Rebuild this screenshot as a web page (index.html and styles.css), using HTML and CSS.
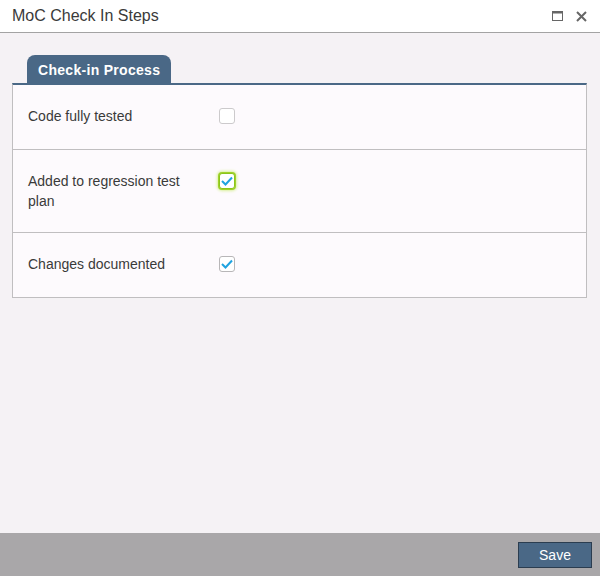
FILE: index.html
```html
<!DOCTYPE html>
<html lang="en">
<head>
    <meta charset="UTF-8">
    <title>MoC Check In Steps</title>
    <link rel="stylesheet" href="styles.css">
</head>
<body>
    <div class="dialog">
        <!-- Title bar -->
        <div class="titlebar">
            <span class="title">MoC Check In Steps</span>
            <div class="title-tools">
                <svg class="tool" width="11" height="10" viewBox="0 0 11 10">
                    <rect x="0.5" y="0.5" width="10" height="9" fill="none" stroke="#666" stroke-width="1"/>
                    <rect x="0" y="0" width="11" height="2.5" fill="#666"/>
                </svg>
                <svg class="tool" width="11" height="11" viewBox="0 0 11 11">
                    <path d="M1 1 L10 10 M10 1 L1 10" stroke="#666" stroke-width="2"/>
                </svg>
            </div>
        </div>

        <!-- Content -->
        <div class="content">
            <div class="tabs">
                <div class="tab">Check-in Process</div>
            </div>
            <div class="panel">
                <div class="row">
                    <div class="label">Code fully tested</div>
                    <span class="check"></span>
                </div>
                <div class="row">
                    <div class="label">Added to regression test plan</div>
                    <span class="check checked focused">
                        <svg width="12" height="10" viewBox="0 0 12 10"><path d="M1 5 L4.5 8.5 L11 1.5" fill="none" stroke="#1fa3e0" stroke-width="2"/></svg>
                    </span>
                </div>
                <div class="row">
                    <div class="label">Changes documented</div>
                    <span class="check checked">
                        <svg width="12" height="10" viewBox="0 0 12 10"><path d="M1 5 L4.5 8.5 L11 1.5" fill="none" stroke="#1fa3e0" stroke-width="2"/></svg>
                    </span>
                </div>
            </div>
        </div>

        <!-- Footer -->
        <div class="footer">
            <button class="save">Save</button>
        </div>
    </div>
</body>
</html>
```

FILE: styles.css
```css
body {
    margin: 0;
    font-family: 'Liberation Sans', Arial, sans-serif;
    color: #3a3a3a;
}

.dialog {
    width: 600px;
    height: 576px;
    display: flex;
    flex-direction: column;
    background-color: #f5f2f5;
}

/* Title bar */
.titlebar {
    height: 32px;
    display: flex;
    align-items: center;
    justify-content: space-between;
    background-color: #fff;
    border-bottom: 1px solid #a3a3a3;
    padding: 0 13px 0 12px;
}

.title {
    font-size: 16px;
    color: #3a3a3a;
}

.title-tools {
    display: flex;
    align-items: center;
    gap: 13px;
}

.tool {
    display: block;
}

/* Content */
.content {
    flex: 1;
    padding: 22px 13px 0 12px;
}

.tabs {
    display: flex;
    padding-left: 15px;
}

.tab {
    background-color: #4a6886;
    color: #fff;
    font-weight: bold;
    font-size: 14px;
    letter-spacing: 0.3px;
    height: 28px;
    line-height: 30px;
    padding: 0 11px;
    border-radius: 8px 8px 0 0;
}

.panel {
    background-color: #fdfafd;
    border: 1px solid #c0bec0;
    border-top: 2px solid #4a6886;
}

.row {
    display: flex;
    align-items: flex-start;
    padding: 21px 16px 21px 15px;
    border-top: 1px solid #c0bec0;
    min-height: 22px;
}

.row:first-child {
    border-top: none;
}

.label {
    width: 172px;
    padding-right: 19px;
    font-size: 14px;
    line-height: 20px;
    color: #3a3a3a;
}

.check {
    width: 14px;
    height: 14px;
    margin-top: 2px;
    border: 1px solid #cccacc;
    border-radius: 3px;
    background-color: #fff;
    display: flex;
    align-items: center;
    justify-content: center;
}

.check.checked {
    border-color: #b8b6b8;
}

.check.focused {
    border: 1px solid #8cc41a;
    box-shadow: 0 0 0 1px #9fd22a, 0 0 3px 2px #d9f09a;
}

/* Footer */
.footer {
    height: 43px;
    background-color: #a9a7a9;
    display: flex;
    align-items: center;
    justify-content: flex-end;
    padding-right: 8px;
}

.save {
    width: 74px;
    height: 26px;
    background-color: #4a6886;
    border: 1px solid #2b3d50;
    color: #fff;
    font-family: 'Liberation Sans', Arial, sans-serif;
    font-size: 14px;
    padding: 0;
}
```
